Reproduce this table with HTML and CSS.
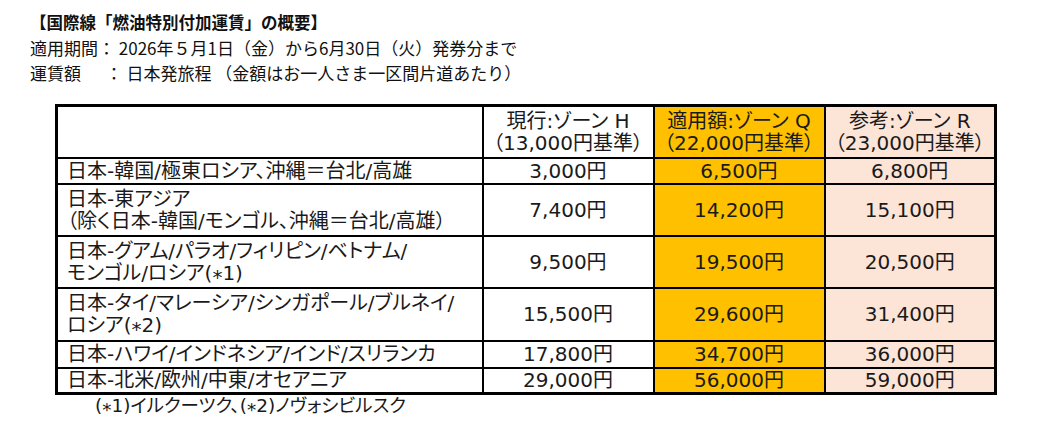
FILE: index.html
```html
<!DOCTYPE html>
<html lang="ja">
<head>
<meta charset="utf-8">
<title>国際線「燃油特別付加運賃」の概要</title>
<link rel="stylesheet" href="styles.css">
</head>
<body>
<div class="intro">
  <p class="title">【国際線「燃油特別付加運賃」の概要】</p>
  <p class="line">適用期間： 2026年５月1日（金）から6月30日（火）発券分まで</p>
  <p class="line">運賃額　  ： 日本発旅程 （金額はお一人さま一区間片道あたり）</p>
</div>
<table class="fares">
  <colgroup>
    <col class="c-route">
    <col class="c-zone">
    <col class="c-zone">
    <col class="c-zone">
  </colgroup>
  <thead>
    <tr class="h2">
      <th class="route"></th>
      <th>現行:ゾーン H<br>（13,000円基準）</th>
      <th class="q">適用額:ゾーン Q<br>（22,000円基準）</th>
      <th class="r">参考:ゾーン R<br>（23,000円基準）</th>
    </tr>
  </thead>
  <tbody>
    <tr class="h1">
      <td class="route">日本-韓国/極東ロシア、沖縄＝台北/高雄</td>
      <td>3,000円</td><td class="q">6,500円</td><td class="r">6,800円</td>
    </tr>
    <tr class="h2">
      <td class="route">日本-東アジア<br>（除く日本-韓国/モンゴル、沖縄＝台北/高雄）</td>
      <td>7,400円</td><td class="q">14,200円</td><td class="r">15,100円</td>
    </tr>
    <tr class="h2">
      <td class="route">日本-グアム/パラオ/フィリピン/ベトナム/<br>モンゴル/ロシア(<span class="ast">*</span>1)</td>
      <td>9,500円</td><td class="q">19,500円</td><td class="r">20,500円</td>
    </tr>
    <tr class="h2b">
      <td class="route">日本-タイ/マレーシア/シンガポール/ブルネイ/<br>ロシア(<span class="ast">*</span>2)</td>
      <td>15,500円</td><td class="q">29,600円</td><td class="r">31,400円</td>
    </tr>
    <tr class="h1b">
      <td class="route">日本-ハワイ/インドネシア/インド/スリランカ</td>
      <td>17,800円</td><td class="q">34,700円</td><td class="r">36,000円</td>
    </tr>
    <tr class="h1">
      <td class="route">日本-北米/欧州/中東/オセアニア</td>
      <td>29,000円</td><td class="q">56,000円</td><td class="r">59,000円</td>
    </tr>
  </tbody>
</table>
<p class="note">(<span class="ast">*</span>1)イルクーツク、(<span class="ast">*</span>2)ノヴォシビルスク</p>
</body>
</html>
```
FILE: styles.css
```css
html, body {
  margin: 0;
  padding: 0;
  background: #ffffff;
}
body {
  padding: 10px 0 0 30px;
  color: #111;
  font-family: "Noto Sans CJK JP", "Noto Sans", sans-serif;
}
.intro p {
  margin: 0;
  font-size: 17px;
  line-height: 25px;
  white-space: pre;
}
.intro .title {
  font-size: 16.5px;
  font-weight: bold;
}
.fares {
  margin: 19px 0 0 25px;
  border-collapse: collapse;
  table-layout: fixed;
  width: 941px;
  border: 3px solid #000;
  font-family: "DejaVu Sans", "Noto Sans CJK JP", sans-serif;
  font-size: 20px;
  color: #1a1a1a;
  font-feature-settings: "palt";
}
.c-route { width: 426px; }
.c-zone { width: 171px; }
.fares th,
.fares td {
  border: 2px solid #000;
  padding: 0 4px;
  line-height: 22px;
  text-align: center;
  vertical-align: middle;
  font-weight: normal;
  white-space: nowrap;
}
.fares .route {
  text-align: left;
  padding-left: 9px;
}
.fares .q { background: #ffc000; }
.fares .r { background: #fce4d6; }
.h1 { height: 26px; }
.h1b { height: 27px; }
.h2 { height: 52px; }
.h2b { height: 53px; }
.ast {
  vertical-align: -0.22em;
  line-height: 0;
}
.note {
  margin: 0 0 0 65px;
  font-family: "DejaVu Sans", "Noto Sans CJK JP", sans-serif;
  font-size: 18.5px;
  line-height: 22px;
  font-feature-settings: "palt";
  color: #1a1a1a;
}
```
